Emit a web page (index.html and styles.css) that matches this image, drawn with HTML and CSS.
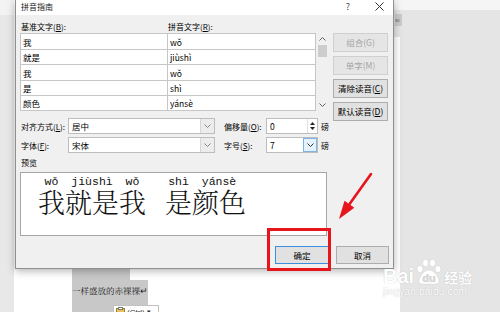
FILE: index.html
```html
<!DOCTYPE html>
<html lang="zh-CN">

<head>
    <meta charset="UTF-8">
    <meta name="viewport" content="width=device-width, initial-scale=1.0">
    <title>拼音指南</title>
    <link rel="stylesheet" href="styles.css">
</head>

<body>
    <div class="screen">
        <div class="ruler-left"></div>
        <div class="page">
            <div class="sel sel-top"></div>
            <div class="sel sel-text">一样盛放的赤裸裸↵</div>
        </div>
        <div class="canvas-right"></div>

        <div class="ruler-tab"><span>40</span></div>

        <div class="dialog">
            <div class="titlebar">
                <span class="title">拼音指南</span>
                <span class="help">?</span>
                <svg class="close" width="9" height="9" viewBox="0 0 9 9">
                    <path d="M0.5 0.5 L8.5 8.5 M8.5 0.5 L0.5 8.5" stroke="#333" stroke-width="1" fill="none" />
                </svg>
            </div>

            <div class="dialog-body">
                <div class="top">
                    <div class="grid-area">
                        <div class="labels">
                            <span>基准文字(<u>B</u>):</span>
                            <span>拼音文字(<u>R</u>):</span>
                        </div>
                        <div class="grid-wrap">
                            <div class="grid">
                                <div class="cell">我</div>
                                <div class="cell">wǒ</div>
                                <div class="cell">就是</div>
                                <div class="cell">jiùshì</div>
                                <div class="cell">我</div>
                                <div class="cell">wǒ</div>
                                <div class="cell">是</div>
                                <div class="cell">shì</div>
                                <div class="cell">颜色</div>
                                <div class="cell">yánsè</div>
                            </div>
                            <div class="scrollbar">
                                <div class="sb-arrow">
                                    <svg width="7" height="4" viewBox="0 0 7 4"><path d="M0.5 3.5 L3.5 0.5 L6.5 3.5" stroke="#606060" fill="none" /></svg>
                                </div>
                                <div class="sb-thumb"></div>
                                <div class="sb-track"></div>
                                <div class="sb-arrow">
                                    <svg width="7" height="4" viewBox="0 0 7 4"><path d="M0.5 0.5 L3.5 3.5 L6.5 0.5" stroke="#606060" fill="none" /></svg>
                                </div>
                            </div>
                        </div>
                    </div>

                    <div class="side-buttons">
                        <button class="btn" disabled>组合(G)</button>
                        <button class="btn" disabled>单字(M)</button>
                        <button class="btn">清除读音(<u>C</u>)</button>
                        <button class="btn">默认读音(<u>D</u>)</button>
                    </div>
                </div>

                <div class="opts">
                    <div class="opt-row">
                        <span class="opt-label">对齐方式(<u>L</u>):</span>
                        <div class="select">
                            <span class="select-value">居中</span>
                            <span class="select-arrow">
                                <svg width="7" height="4" viewBox="0 0 7 4"><path d="M0.5 0.5 L3.5 3.5 L6.5 0.5" stroke="#888" fill="none" /></svg>
                            </span>
                        </div>
                        <span class="opt-label2">偏移量(<u>O</u>):</span>
                        <div class="spin">
                            <span class="select-value">0</span>
                            <span class="spin-arrows">
                                <svg width="5" height="3" viewBox="0 0 5 3"><path d="M0 3 L2.5 0 L5 3 Z" fill="#222" /></svg>
                                <svg width="5" height="3" viewBox="0 0 5 3"><path d="M0 0 L2.5 3 L5 0 Z" fill="#222" /></svg>
                            </span>
                        </div>
                        <span class="unit">磅</span>
                    </div>
                    <div class="opt-row">
                        <span class="opt-label">字体(<u>F</u>):</span>
                        <div class="select">
                            <span class="select-value">宋体</span>
                            <span class="select-arrow">
                                <svg width="7" height="4" viewBox="0 0 7 4"><path d="M0.5 0.5 L3.5 3.5 L6.5 0.5" stroke="#888" fill="none" /></svg>
                            </span>
                        </div>
                        <span class="opt-label2">字号(<u>S</u>):</span>
                        <div class="spin">
                            <span class="select-value">7</span>
                            <span class="select-arrow active">
                                <svg width="7" height="4" viewBox="0 0 7 4"><path d="M0.5 0.5 L3.5 3.5 L6.5 0.5" stroke="#333" fill="none" /></svg>
                            </span>
                        </div>
                        <span class="unit">磅</span>
                    </div>
                </div>

                <div class="preview-label">预览</div>
                <div class="preview">
                    <div class="group"><span class="py">wǒ</span><span class="hz">我</span></div>
                    <div class="group"><span class="py">jiùshì</span><span class="hz">就是</span></div>
                    <div class="group"><span class="py">wǒ</span><span class="hz">我</span></div>
                    <div class="group gap"></div>
                    <div class="group"><span class="py">shì</span><span class="hz">是</span></div>
                    <div class="group"><span class="py">yánsè</span><span class="hz">颜色</span></div>
                </div>

                <div class="footer">
                    <button class="btn btn-ok">确定</button>
                    <button class="btn btn-cancel">取消</button>
                </div>
            </div>
        </div>

        <div class="paste-btn">
            <svg width="9" height="10" viewBox="0 0 9 10">
                <rect x="0.5" y="1.5" width="8" height="8" fill="#e8c25a" stroke="#a27d22" />
                <rect x="2.5" y="0.5" width="4" height="2" fill="#fff" stroke="#777" />
            </svg>
            <span>(Ctrl)</span>
            <span class="caret">▾</span>
        </div>

        <div class="watermark">
            <div class="wm-line">
                <span class="wm-bai">Bai</span>
                <svg class="wm-paw" width="28" height="28" viewBox="0 0 28 28">
                    <ellipse cx="5" cy="11" rx="3" ry="3.6" />
                    <ellipse cx="10.5" cy="5" rx="3" ry="3.8" />
                    <ellipse cx="17.5" cy="5" rx="3" ry="3.8" />
                    <ellipse cx="23" cy="11" rx="3" ry="3.6" />
                    <path d="M14 12 C9 12 5 18 4 22 C3 26 8 27 14 26 C20 27 25 26 24 22 C23 18 19 12 14 12 Z" />
                    <text x="14" y="24" text-anchor="middle">du</text>
                </svg>
                <span class="wm-jy">经验</span>
            </div>
            <div class="wm-url">jingyan.baidu.com</div>
        </div>

        <div class="mark-box"></div>
        <svg class="mark-arrow" width="500" height="312" viewBox="0 0 500 312">
            <path d="M371 174 L349.4 204.3" stroke="#e8141b" stroke-width="2.6" stroke-linecap="round" fill="none" />
            <path d="M339 219 L344.5 200.8 L354.3 207.8 Z" fill="#e8141b" />
        </svg>
    </div>
</body>

</html>
```

FILE: styles.css
```css
* {
    margin: 0;
    padding: 0;
    box-sizing: border-box;
}

body {
    width: 500px;
    height: 312px;
    overflow: hidden;
    font-family: "Noto Sans CJK SC", "Noto Sans", sans-serif;
    font-size: 8px;
    color: #000;
    background: #e6e6e6;
}

u {
    text-decoration: underline;
    text-underline-offset: 1px;
}

.screen {
    position: relative;
    width: 500px;
    height: 312px;
    display: flex;
}

/* word window behind the dialog */

.ruler-left {
    width: 14px;
    background: linear-gradient(#f3f3f3 0 15px, #e8e8e8 15px);
}

.page {
    width: 386px;
    background: #fff;
    padding: 268px 0 0 58px;
}

.sel {
    background: #c8c8c8;
}

.sel-top {
    width: 58px;
    height: 12px;
}

.sel-text {
    width: 76px;
    height: 32px;
    padding-top: 4px;
    font-family: "Noto Serif CJK SC", "Noto Sans CJK SC", serif;
    font-size: 8.5px;
    line-height: 12px;
    color: #222;
    white-space: nowrap;
}

.canvas-right {
    flex: 1;
    background: linear-gradient(#f5f5f5 0 10px, #e5e5e5 10px);
}

.ruler-tab {
    position: absolute;
    left: 393px;
    top: 0;
    width: 7px;
    height: 37px;
    background: linear-gradient(#f5f5f5 0 10px, #e5e5e5 10px);
}

.ruler-tab span {
    display: block;
    margin-top: 14px;
    margin-left: 2px;
    width: 7px;
    height: 12px;
    background: #cbcbcb;
    font-size: 4px;
    line-height: 12px;
    color: #555;
}

/* dialog */

.dialog {
    position: absolute;
    left: 15px;
    top: 0;
    width: 379px;
    height: 269px;
    background: #f0f0f0;
    border: 1px solid #8f8f8f;
    border-top: 0;
    box-shadow: 0 2px 8px rgba(0, 0, 0, 0.3);
    display: flex;
    flex-direction: column;
}

.titlebar {
    height: 15px;
    background: #fff;
    display: flex;
    align-items: flex-start;
    padding-left: 5px;
    padding-top: 1px;
    line-height: 11px;
    font-size: 8px;
}

.title {
    color: #222;
}

.help {
    margin-left: auto;
    color: #444;
    font-size: 9px;
}

.close {
    margin: 1px 9px 0 25px;
}

.dialog-body {
    flex: 1;
    padding: 5px 4px 0 4px;
    display: flex;
    flex-direction: column;
}

.top {
    height: 91px;
    display: flex;
    align-items: flex-start;
    gap: 5px;
}

.grid-area {
    width: 308px;
}

.labels {
    display: flex;
    height: 13px;
    line-height: 13px;
}

.labels span:first-child {
    width: 148px;
    padding-left: 1px;
}

.grid-wrap {
    display: flex;
}

.grid {
    display: grid;
    grid-template-columns: 147px 148px;
    grid-template-rows: 16px 15px 16px 15px 15px;
    width: 296px;
    border-top: 1px solid #c6c6c6;
    border-left: 1px solid #c6c6c6;
}

.cell {
    background: #fff;
    border-right: 1px solid #c6c6c6;
    border-bottom: 1px solid #c6c6c6;
    padding-left: 2px;
    display: flex;
    align-items: center;
    line-height: 12px;
    font-size: 8.5px;
}

.scrollbar {
    width: 12px;
    height: 78px;
    background: #f0f0f0;
    display: flex;
    flex-direction: column;
    align-items: center;
}

.sb-arrow {
    height: 12px;
    display: flex;
    align-items: center;
    justify-content: center;
}

.sb-thumb {
    width: 9px;
    height: 12px;
    background: #cdcdcd;
}

.sb-track {
    flex: 1;
}

.side-buttons {
    width: 55px;
    padding-top: 13px;
    display: flex;
    flex-direction: column;
    gap: 4px;
}

.btn {
    height: 19px;
    background: #e1e1e1;
    border: 1px solid #adadad;
    font-family: inherit;
    font-size: 8.5px;
    line-height: 15px;
    color: #000;
    padding: 0;
    white-space: nowrap;
}

.btn:disabled {
    color: #a6a6a6;
    background: #e5e5e5;
    border-color: #cfcfcf;
}

/* alignment / font rows */

.opts {
    margin-top: 7px;
    display: flex;
    flex-direction: column;
    gap: 3px;
}

.opt-row {
    display: flex;
    align-items: center;
    height: 16px;
}

.opt-label {
    width: 48px;
    padding-left: 1px;
    white-space: nowrap;
}

.opt-label2 {
    width: 42px;
    margin-left: 9px;
    white-space: nowrap;
}

.select,
.spin {
    height: 16px;
    background: #fff;
    border: 1px solid #bdbdbd;
    display: flex;
    font-size: 8.5px;
}

.select {
    width: 147px;
}

.spin {
    width: 52px;
}

.select-value {
    flex: 1;
    padding-left: 3px;
    line-height: 14px;
}

.select-arrow {
    width: 14px;
    background: #ececec;
    border-left: 1px solid #d6d6d6;
    display: flex;
    align-items: center;
    justify-content: center;
}

.select-arrow.active {
    background: #e5f1fb;
    border: 1px solid #7eb4ea;
}

.spin-arrows {
    width: 10px;
    display: flex;
    flex-direction: column;
    align-items: center;
    justify-content: center;
    gap: 2px;
    border-left: 1px solid #e0e0e0;
}

.unit {
    margin-left: 3px;
}

/* preview */

.preview-label {
    margin-top: 4px;
    line-height: 12px;
    padding-left: 1px;
}

.preview {
    margin-top: 3px;
    width: 307px;
    height: 64px;
    background: #fff;
    border: 1px solid #a5a5a5;
    padding: 2px 0 0 17px;
    display: flex;
}

.group {
    display: flex;
    flex-direction: column;
    align-items: center;
}

.gap {
    width: 19px;
}

.py {
    font-family: "Liberation Mono", monospace;
    font-size: 11.5px;
    line-height: 13px;
    height: 13px;
    color: #111;
}

.hz {
    font-family: "Noto Serif CJK SC", "Noto Sans CJK SC", serif;
    font-size: 27px;
    line-height: 28px;
    font-weight: 300;
    color: #111;
}

.footer {
    margin-top: 10px;
    display: flex;
    justify-content: flex-end;
    gap: 7px;
}

.footer .btn {
    height: 18px;
}

.btn-ok {
    width: 54px;
    border-color: #3b8ede;
}

.btn-cancel {
    width: 53px;
}

/* overlays */

.paste-btn {
    position: absolute;
    left: 113px;
    top: 305px;
    width: 46px;
    height: 14px;
    background: #fff;
    border: 1px solid #c2c2c2;
    display: flex;
    align-items: center;
    gap: 2px;
    padding-left: 2px;
    font-family: "Liberation Sans", sans-serif;
    font-size: 8px;
    color: #333;
}

.caret {
    font-size: 7px;
}

.watermark {
    position: absolute;
    left: 383px;
    top: 258px;
    color: #fff;
    text-shadow: 0 0 1px rgba(0, 0, 0, 0.25);
}

.wm-line {
    display: flex;
    align-items: flex-end;
}

.wm-bai {
    font-family: "Liberation Sans", sans-serif;
    font-weight: bold;
    font-size: 20px;
    line-height: 20px;
}

.wm-paw {
    fill: #fff;
    stroke: #d2d2d2;
    stroke-width: 0.6;
    margin: 0 1px 0 1px;
}

.wm-paw text {
    font-family: "Liberation Sans", sans-serif;
    font-weight: bold;
    font-size: 11px;
    fill: #d9d9d9;
    stroke: none;
}

.wm-jy {
    font-size: 14px;
    line-height: 18px;
    font-weight: bold;
}

.wm-url {
    font-family: "Liberation Sans", sans-serif;
    font-size: 10px;
    line-height: 12px;
    letter-spacing: 0.2px;
}

.mark-box {
    position: absolute;
    left: 267px;
    top: 228px;
    width: 64px;
    height: 43px;
    border: 3px solid #e8141b;
}

.mark-arrow {
    position: absolute;
    left: 0;
    top: 0;
    pointer-events: none;
}
```
